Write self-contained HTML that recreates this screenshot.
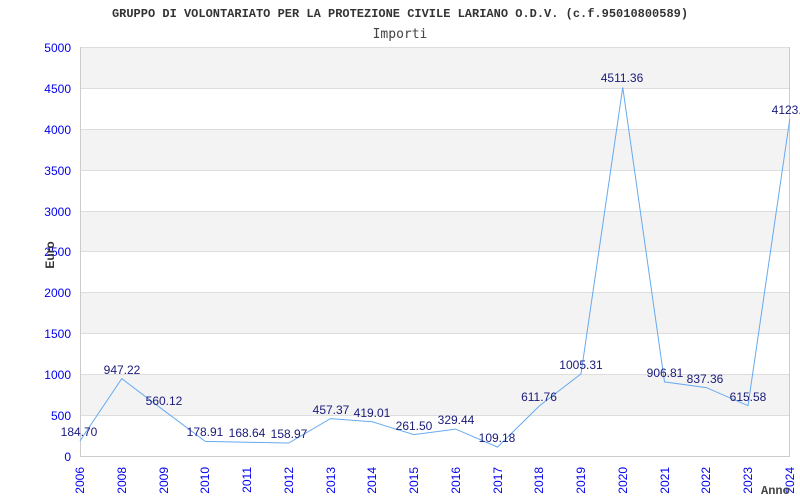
<!DOCTYPE html>
<html><head><meta charset="utf-8"><style>
html,body{margin:0;padding:0;background:#fff;width:800px;height:500px;overflow:hidden}
svg{display:block}
</style></head><body>
<svg width="800" height="500" xmlns="http://www.w3.org/2000/svg">
<rect x="0" y="0" width="800" height="500" fill="#fff"/>
<g fill="#f3f3f3">
<rect x="80" y="47" width="710" height="41"/>
<rect x="80" y="129" width="710" height="41"/>
<rect x="80" y="211" width="710" height="41"/>
<rect x="80" y="293" width="710" height="41"/>
<rect x="80" y="374" width="710" height="41"/>
</g>
<g stroke="#dddddd" stroke-width="1">
<line x1="80" y1="47.5" x2="790" y2="47.5"/>
<line x1="80" y1="88.5" x2="790" y2="88.5"/>
<line x1="80" y1="129.5" x2="790" y2="129.5"/>
<line x1="80" y1="170.5" x2="790" y2="170.5"/>
<line x1="80" y1="211.5" x2="790" y2="211.5"/>
<line x1="80" y1="251.5" x2="790" y2="251.5"/>
<line x1="80" y1="292.5" x2="790" y2="292.5"/>
<line x1="80" y1="333.5" x2="790" y2="333.5"/>
<line x1="80" y1="374.5" x2="790" y2="374.5"/>
<line x1="80" y1="415.5" x2="790" y2="415.5"/>
</g>
<g stroke="#cccccc" stroke-width="1" fill="none">
<line x1="80.5" y1="47" x2="80.5" y2="456"/>
<line x1="789.5" y1="47" x2="789.5" y2="456"/>
<line x1="80" y1="456.5" x2="790" y2="456.5"/>
</g>
<text x="400" y="17" text-anchor="middle" font-family="Liberation Mono, monospace" font-weight="bold" font-size="12" fill="#333">GRUPPO DI VOLONTARIATO PER LA PROTEZIONE CIVILE LARIANO O.D.V. (c.f.95010800589)</text>
<text x="400" y="38" text-anchor="middle" font-family="DejaVu Sans Mono, monospace" font-size="13" fill="#444">Importi</text>
<g font-family="Liberation Sans, sans-serif" font-size="12" fill="#0000ee" text-anchor="end">
<text x="71" y="52">5000</text><text x="71" y="93">4500</text><text x="71" y="134">4000</text>
<text x="71" y="175">3500</text><text x="71" y="216">3000</text><text x="71" y="256">2500</text>
<text x="71" y="297">2000</text><text x="71" y="338">1500</text><text x="71" y="379">1000</text>
<text x="71" y="420">500</text><text x="71" y="461">0</text>
</g>
<text transform="translate(54,255) rotate(-90)" text-anchor="middle" font-family="Liberation Sans, sans-serif" font-weight="bold" font-size="12" fill="#333">Euro</text>
<polyline fill="none" stroke="#66aaee" stroke-width="1" points="80,440.9 121.75,378.6 163.5,410.2 205.25,441.4 247,442.2 288.75,443 330.5,418.6 372.25,421.8 414,434.6 455.75,429.1 497.5,447.1 539.25,406 581,373.9 622.75,87.4 664.5,381.9 706.25,387.6 748,405.7 789.75,119.1"/>
<g font-family="Liberation Sans, sans-serif" font-size="12" fill="#1a1a7a" text-anchor="middle">
<text x="79" y="436">184.70</text><text x="122" y="374">947.22</text><text x="164" y="405">560.12</text>
<text x="205" y="436">178.91</text><text x="247" y="437">168.64</text><text x="289" y="438">158.97</text>
<text x="331" y="414">457.37</text><text x="372" y="417">419.01</text><text x="414" y="430">261.50</text>
<text x="456" y="424">329.44</text><text x="497" y="442">109.18</text><text x="539" y="401">611.76</text>
<text x="581" y="369">1005.31</text><text x="622" y="82">4511.36</text><text x="665" y="377">906.81</text>
<text x="705" y="383">837.36</text><text x="748" y="401">615.58</text><text x="790" y="114">4123.3</text>
</g>
<g font-family="Liberation Sans, sans-serif" font-size="12" fill="#0000ee" text-anchor="end">
<text transform="translate(84,467) rotate(-90)">2006</text>
<text transform="translate(126,467) rotate(-90)">2008</text>
<text transform="translate(168,467) rotate(-90)">2009</text>
<text transform="translate(209,467) rotate(-90)">2010</text>
<text transform="translate(251,467) rotate(-90)">2011</text>
<text transform="translate(293,467) rotate(-90)">2012</text>
<text transform="translate(335,467) rotate(-90)">2013</text>
<text transform="translate(376,467) rotate(-90)">2014</text>
<text transform="translate(418,467) rotate(-90)">2015</text>
<text transform="translate(460,467) rotate(-90)">2016</text>
<text transform="translate(502,467) rotate(-90)">2017</text>
<text transform="translate(543,467) rotate(-90)">2018</text>
<text transform="translate(585,467) rotate(-90)">2019</text>
<text transform="translate(627,467) rotate(-90)">2020</text>
<text transform="translate(669,467) rotate(-90)">2021</text>
<text transform="translate(710,467) rotate(-90)">2022</text>
<text transform="translate(752,467) rotate(-90)">2023</text>
<text transform="translate(794,467) rotate(-90)">2024</text>
</g>
<text x="761" y="494" font-family="Liberation Mono, monospace" font-weight="bold" font-size="12" fill="#444">Anno</text>
</svg>
</body></html>
